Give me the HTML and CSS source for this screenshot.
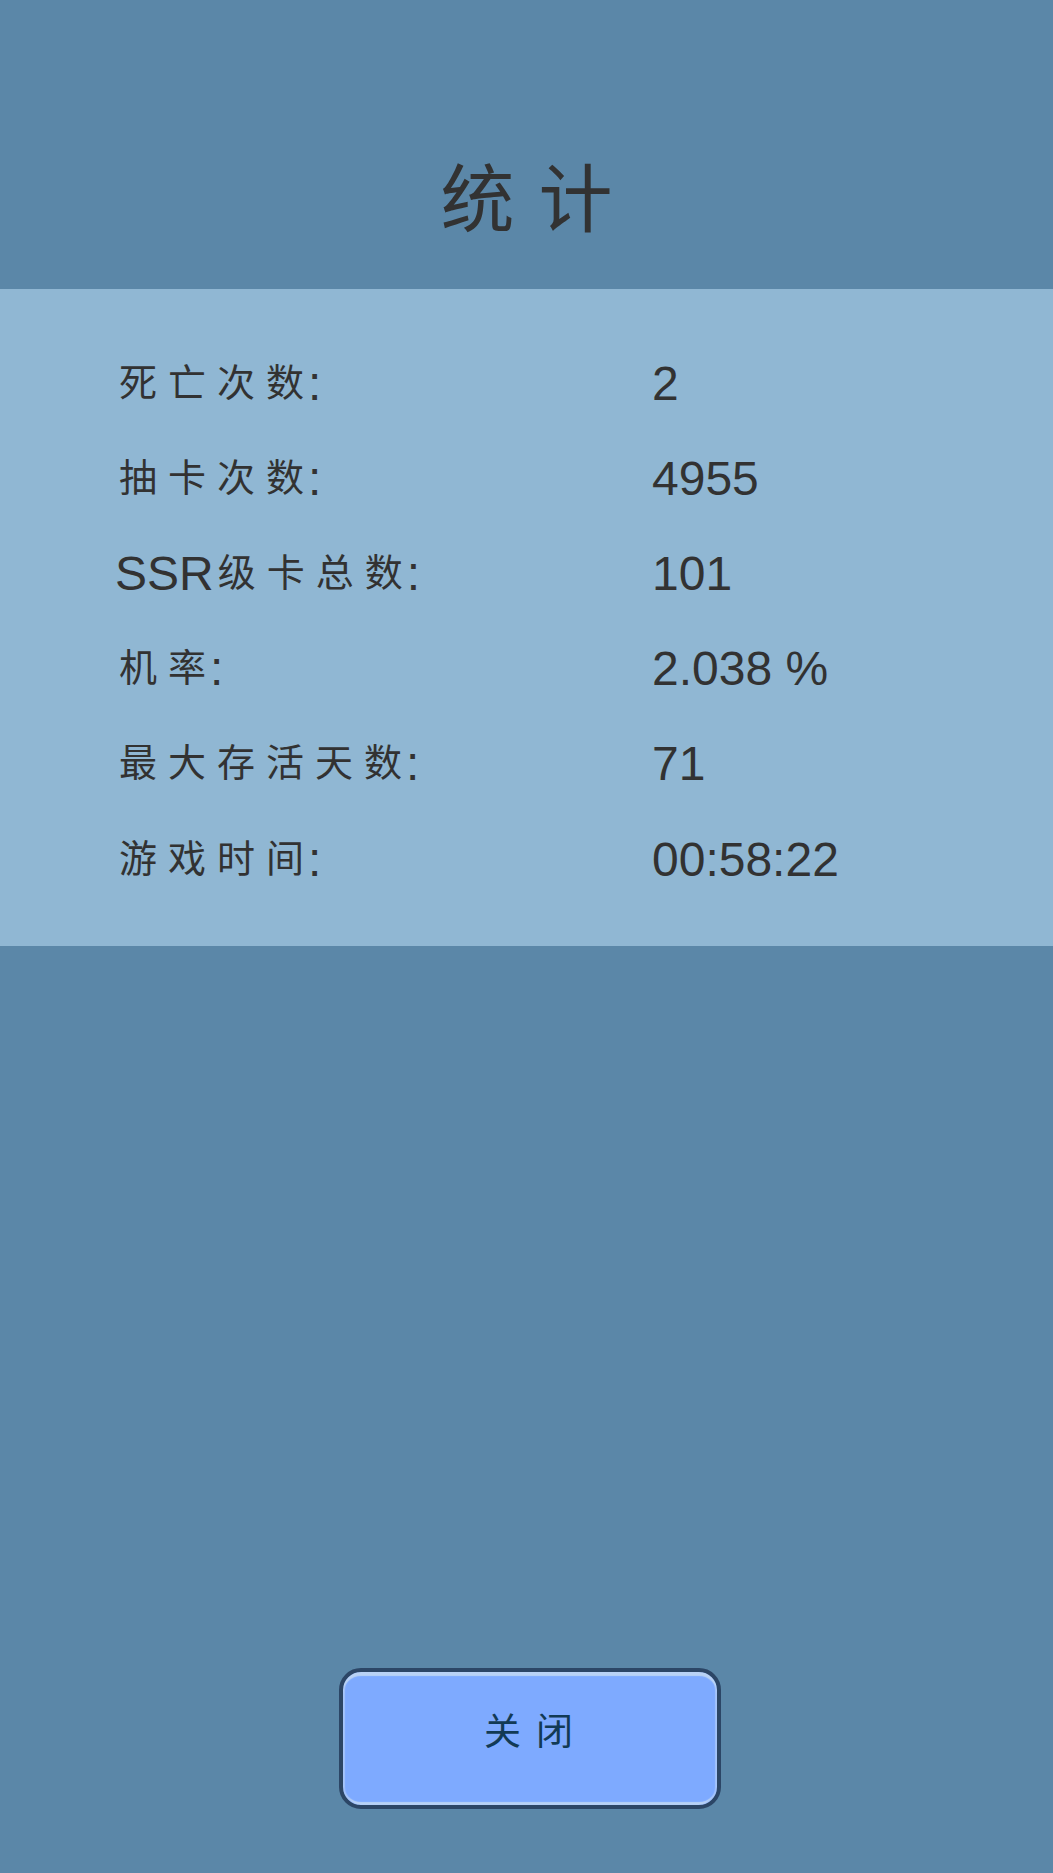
FILE: index.html
```html
<!DOCTYPE html>
<html lang="zh-CN">
<head>
<meta charset="utf-8">
<title>统计</title>
<link rel="stylesheet" href="styles.css">
</head>
<body>
<main class="screen">
  <h1 class="title">统计</h1>
  <section class="panel">
    <div class="row"><span class="label"><span class="cjk">死亡次<span class="end">数</span></span>:</span><span class="value">2</span></div>
    <div class="row"><span class="label"><span class="cjk">抽卡次<span class="end">数</span></span>:</span><span class="value">4955</span></div>
    <div class="row"><span class="label">SSR<span class="cjk">级卡总<span class="end">数</span></span>:</span><span class="value">101</span></div>
    <div class="row"><span class="label"><span class="cjk">机<span class="end">率</span></span>:</span><span class="value">2.038 %</span></div>
    <div class="row"><span class="label"><span class="cjk">最大存活天<span class="end">数</span></span>:</span><span class="value">71</span></div>
    <div class="row"><span class="label"><span class="cjk">游戏时<span class="end">间</span></span>:</span><span class="value">00:58:22</span></div>
  </section>
  <div class="spacer"></div>
  <button class="close" type="button">关闭</button>
</main>
</body>
</html>
```
FILE: styles.css
```css
* { box-sizing: border-box; }
html, body { margin: 0; height: 100%; }
body {
  background: #5b87a8;
  color: #323232;
  font-family: "Liberation Sans", "Noto Sans CJK SC", sans-serif;
}
.screen {
  height: 1873px;
  display: flex;
  flex-direction: column;
  padding-bottom: 64px;
}
.title {
  height: 289px;
  margin: 0;
  padding-top: 142px;
  text-align: center;
  font-family: "Noto Sans CJK SC", sans-serif;
  font-size: 74px;
  line-height: 104px;
  font-weight: 400;
  letter-spacing: 24px;
  text-indent: 24px;
}
.panel {
  height: 657px;
  background: #90b7d3;
  padding: 47px 0 0 115px;
  display: flex;
  flex-direction: column;
}
.row {
  display: flex;
  height: 95.2px;
  align-items: center;
  font-size: 48px;
  line-height: 56px;
}
.label { width: 537px; white-space: nowrap; }
.cjk {
  display: inline-block;
  font-family: "Noto Sans CJK SC", sans-serif;
  font-size: 38px;
  line-height: 48px;
  letter-spacing: 11px;
  margin-left: 4px;
  transform: translateY(-4px);
}
.end { letter-spacing: 4px; }
.value { font-size: 48px; }
.spacer { flex: 1; }
.close {
  align-self: flex-start;
  margin-left: 339px;
  width: 382px;
  height: 141px;
  border-radius: 22px;
  border: 4px solid #2c4666;
  background: #7eaaff;
  box-shadow: inset 0 4px 1px #b9d2f5, inset 2px 0 1px #a3c2fb, inset -2px 0 1px #a3c2fb, inset 0 -3px 1px #b9d2f5;
  color: #123a55;
  font-family: "Noto Sans CJK SC", sans-serif;
  font-size: 37px;
  letter-spacing: 15px;
  padding: 0 0 20px 12px;
}
```
